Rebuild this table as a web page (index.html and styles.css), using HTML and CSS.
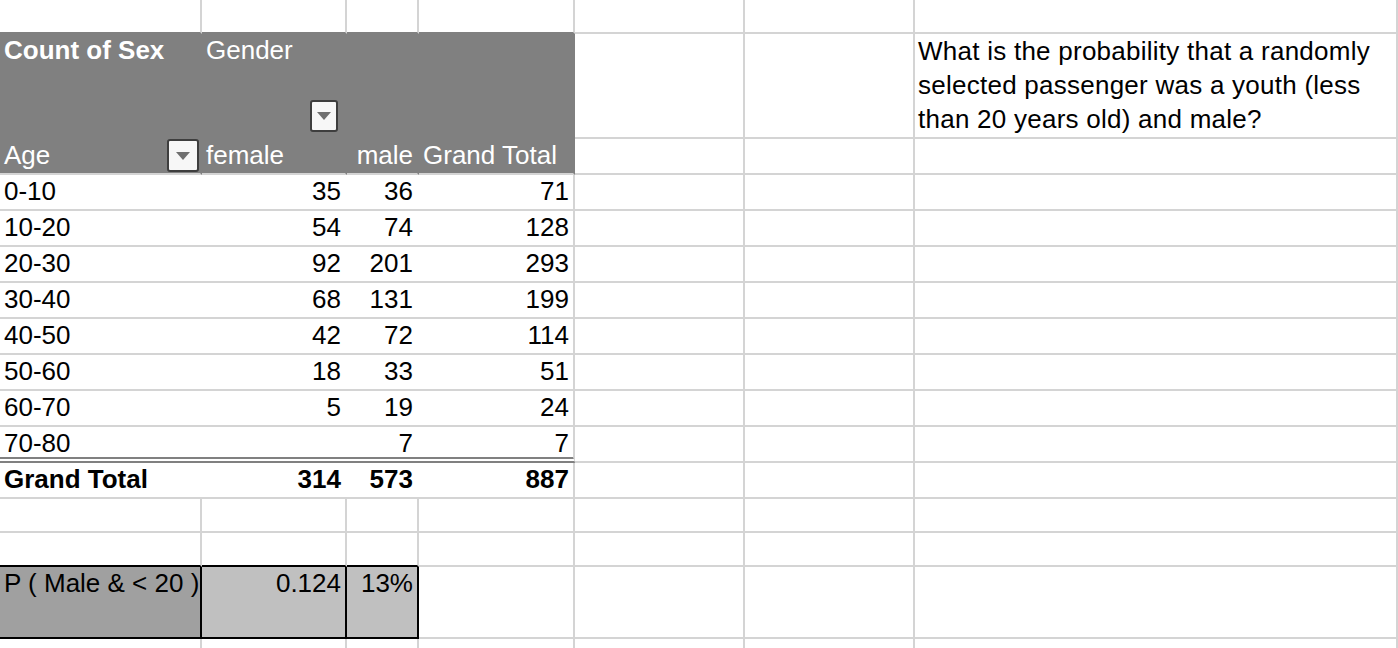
FILE: index.html
```html
<!DOCTYPE html>
<html>
<head>
<meta charset="utf-8">
<link rel="stylesheet" href="styles.css">
</head>
<body>
<div class="sheet">
  <div class="row r0">
    <div class="c pt"></div><div class="c pt"></div><div class="c pt"></div><div class="c pt"></div><div class="c"></div><div class="c"></div><div class="c"></div>
  </div>
  <div class="row rh">
    <div class="c pv b">Count of Sex</div>
    <div class="c pv gender"><span>Gender</span><span class="dd dd-g"><i class="tri"></i></span></div>
    <div class="c pv"></div>
    <div class="c pv"></div>
    <div class="c"></div>
    <div class="c"></div>
    <div class="c q">What is the probability that a randomly selected passenger was a youth (less than 20 years old) and male?</div>
  </div>
  <div class="row rd">
    <div class="c pv pa age"><span>Age</span><span class="dd dd-a"><i class="tri"></i></span></div>
    <div class="c pv pa">female</div>
    <div class="c pv pa n">male</div>
    <div class="c pv pa">Grand Total</div>
    <div class="c"></div>
    <div class="c"></div>
    <div class="c"></div>
  </div>
  <div class="row rd">
    <div class="c nb">0-10</div><div class="c nb n">35</div><div class="c nb n">36</div><div class="c n">71</div><div class="c"></div><div class="c"></div><div class="c"></div>
  </div>
  <div class="row rd">
    <div class="c nb">10-20</div><div class="c nb n">54</div><div class="c nb n">74</div><div class="c n">128</div><div class="c"></div><div class="c"></div><div class="c"></div>
  </div>
  <div class="row rd">
    <div class="c nb">20-30</div><div class="c nb n">92</div><div class="c nb n">201</div><div class="c n">293</div><div class="c"></div><div class="c"></div><div class="c"></div>
  </div>
  <div class="row rd">
    <div class="c nb">30-40</div><div class="c nb n">68</div><div class="c nb n">131</div><div class="c n">199</div><div class="c"></div><div class="c"></div><div class="c"></div>
  </div>
  <div class="row rd">
    <div class="c nb">40-50</div><div class="c nb n">42</div><div class="c nb n">72</div><div class="c n">114</div><div class="c"></div><div class="c"></div><div class="c"></div>
  </div>
  <div class="row rd">
    <div class="c nb">50-60</div><div class="c nb n">18</div><div class="c nb n">33</div><div class="c n">51</div><div class="c"></div><div class="c"></div><div class="c"></div>
  </div>
  <div class="row rd">
    <div class="c nb">60-70</div><div class="c nb n">5</div><div class="c nb n">19</div><div class="c n">24</div><div class="c"></div><div class="c"></div><div class="c"></div>
  </div>
  <div class="row rd">
    <div class="c nb dbl">70-80</div><div class="c nb n dbl"></div><div class="c nb n dbl">7</div><div class="c n dbl">7</div><div class="c"></div><div class="c"></div><div class="c"></div>
  </div>
  <div class="row rd gt">
    <div class="c nb">Grand Total</div><div class="c nb n">314</div><div class="c nb n">573</div><div class="c n">887</div><div class="c"></div><div class="c"></div><div class="c"></div>
  </div>
  <div class="row rs">
    <div class="c"></div><div class="c"></div><div class="c"></div><div class="c"></div><div class="c"></div><div class="c"></div><div class="c"></div>
  </div>
  <div class="row rs">
    <div class="c kb"></div><div class="c kb"></div><div class="c kb"></div><div class="c"></div><div class="c"></div><div class="c"></div><div class="c"></div>
  </div>
  <div class="row rp">
    <div class="c pk dark">P ( Male &amp; &lt; 20 )</div><div class="c pk light n">0.124</div><div class="c pk light n">13%</div><div class="c"></div><div class="c"></div><div class="c"></div><div class="c"></div>
  </div>
  <div class="row rl">
    <div class="c"></div><div class="c"></div><div class="c"></div><div class="c"></div><div class="c"></div><div class="c"></div><div class="c"></div>
  </div>
</div>
</body>
</html>
```
FILE: styles.css
```css
html, body {
  margin: 0;
  padding: 0;
  background: #ffffff;
}
body {
  font-family: "Liberation Sans", Arial, sans-serif;
  font-size: 26px;
  color: #000000;
}
.sheet {
  width: 1398px;
  height: 648px;
  overflow: hidden;
}
.row {
  display: grid;
  grid-template-columns: 202px 145px 72px 156px 170px 170px 1fr;
}
.r0 { height: 34px; }
.rh { height: 105px; }
.rd { height: 36px; }
.rs { height: 34px; }
.rp { height: 72px; }
.rl { height: 20px; }

.c {
  box-sizing: border-box;
  border-right: 2px solid #d4d4d4;
  border-bottom: 2px solid #d4d4d4;
  padding: 0 4px 0 4px;
  line-height: 32px;
  white-space: nowrap;
  overflow: hidden;
  min-width: 0;
}
.n { text-align: right; }
.b { font-weight: bold; }
.gt .c { font-weight: bold; }

.pt { border-bottom-color: #808080; }
.pv {
  background: #808080;
  color: #ffffff;
  border-color: #808080;
}
.pa { border-bottom-color: #d4d4d4; }
.nb {
  border-right: 0;
  padding-right: 6px;
}
.dbl { border-bottom: 6px double #808080; }

.gender {
  display: flex;
  flex-direction: column;
  justify-content: space-between;
  align-items: flex-start;
}
.age {
  display: flex;
  justify-content: space-between;
  align-items: flex-start;
  padding-right: 1px;
}

.dd {
  box-sizing: border-box;
  display: flex;
  align-items: center;
  justify-content: center;
  border: 2px solid #3e3e3e;
  border-radius: 3px;
  background: #f7f7f7;
}
.dd-g {
  width: 28px;
  height: 32px;
  align-self: flex-end;
  margin: 0 3px 5px 0;
}
.dd-a {
  width: 32px;
  height: 33px;
}
.tri {
  display: block;
  width: 0;
  height: 0;
  border-left: 7px solid transparent;
  border-right: 7px solid transparent;
  border-top: 8px solid #6f6f6f;
}

.q {
  white-space: normal;
  line-height: 34px;
  padding-left: 3px;
  letter-spacing: 0.25px;
}

.kb { border-bottom-color: #000000; }
.pk {
  border-right-color: #000000;
  border-bottom-color: #000000;
}
.dark { background: #a0a0a0; }
.light { background: #c0c0c0; }
```
